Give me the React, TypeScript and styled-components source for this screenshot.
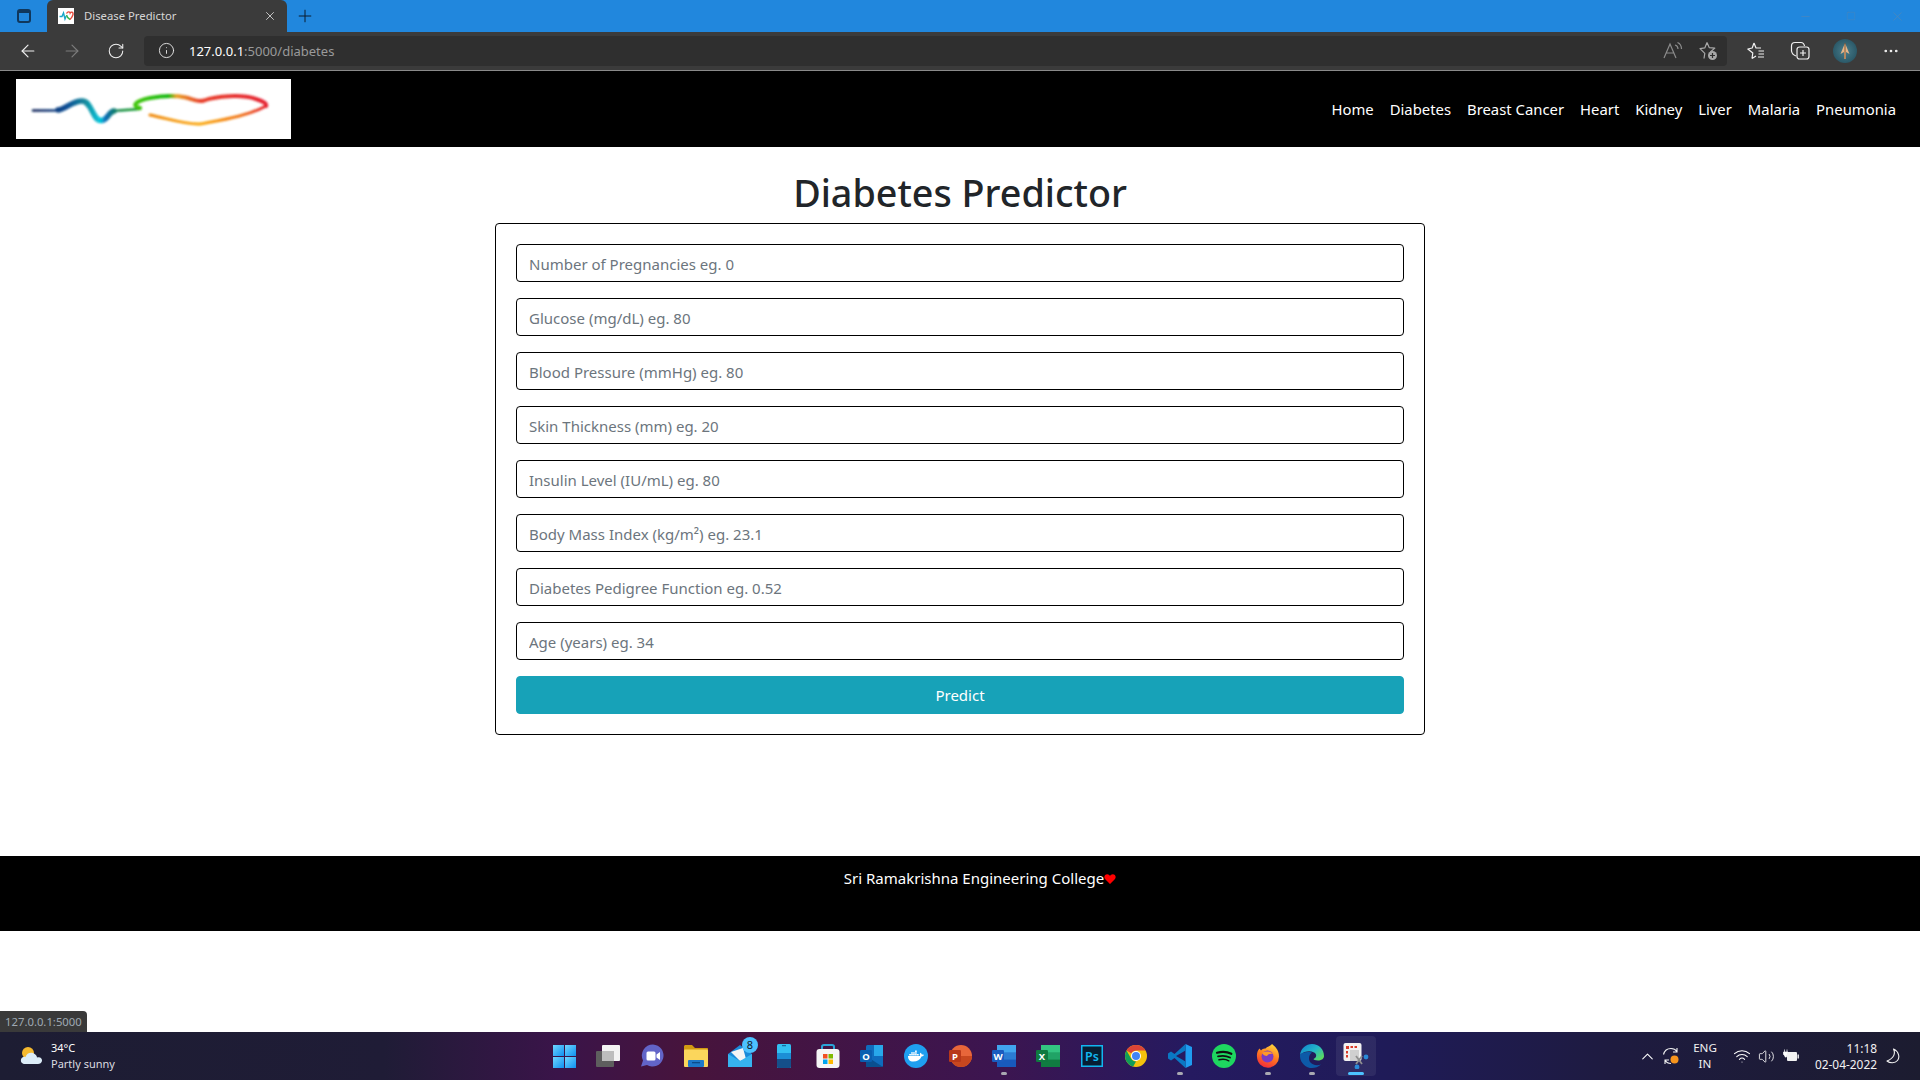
import { ReactNode } from 'react'
import styled, { createGlobalStyle } from 'styled-components'
import { ArrowLeft, ArrowRight, ChevronUp, Info, Minus, MoreHorizontal, Plus, RotateCw, Square, Volume2, Wifi, X } from 'lucide-react'
import { FaDocker } from 'react-icons/fa'

const GlobalStyle = createGlobalStyle`
  html, body {
    margin: 0;
    padding: 0;
    background: #fff;
  }
  body {
    font-family: 'Noto Sans', 'Open Sans', sans-serif;
    color: #212529;
  }
  * {
    box-sizing: border-box;
  }
`

const Screen = styled.div`
  position: relative;
  width: 1920px;
  height: 1080px;
  overflow: hidden;
  display: flex;
  flex-direction: column;
  background: #fff;
`

const TabStrip = styled.div`
  height: 32px;
  flex: none;
  display: flex;
  align-items: flex-end;
  background: #2187dd;
`

const StripButton = styled.div`
  width: 47px;
  height: 32px;
  display: flex;
  align-items: center;
  justify-content: center;
`

const TabIconFrame = styled.span`
  width: 14px;
  height: 14px;
  border: 2px solid #10375c;
  border-radius: 3px;
  border-top-width: 4px;
  display: block;
  background: #2187dd;
`

const Tab = styled.div`
  width: 240px;
  height: 32px;
  display: flex;
  align-items: center;
  padding: 0 10px 0 11px;
  background: #3b3b3b;
  border-radius: 6px 6px 0 0;
  color: #d6d6d6;
`

const TabTitle = styled.span`
  flex: 1;
  margin-left: 10px;
  padding-bottom: 2px;
  font-size: 11.3px;
  white-space: nowrap;
`

const Favicon = styled.span`
  width: 16px;
  height: 16px;
  background: #fff;
  display: flex;
  align-items: center;
  justify-content: center;
`

const NewTab = styled.div`
  width: 36px;
  height: 32px;
  display: flex;
  align-items: center;
  justify-content: center;
  color: #0c1c2e;
`

const WindowControls = styled.div`
  margin-left: auto;
  display: flex;
  height: 32px;
`

const WindowButton = styled.div`
  width: 46px;
  height: 32px;
  display: flex;
  align-items: center;
  justify-content: center;
  color: #5586b4;
`

const Toolbar = styled.div`
  height: 39px;
  flex: none;
  display: flex;
  align-items: center;
  padding: 0 0 1px 6px;
  background: #3b3b3b;
  border-bottom: 1px solid #8a8a8a;
`

const ToolButton = styled.div<{ $width?: number; $color?: string }>`
  width: ${p => p.$width ?? 44}px;
  height: 30px;
  flex: none;
  display: flex;
  align-items: center;
  justify-content: center;
  color: ${p => p.$color ?? '#f0f0f0'};
`

const AddressBar = styled.div`
  width: 1583px;
  height: 30px;
  flex: none;
  margin-left: 6px;
  display: flex;
  align-items: center;
  padding-left: 14px;
  background: #2f2f2f;
  border-radius: 4px;
`

const UrlText = styled.span`
  margin-left: 14px;
  flex: 1;
  font-size: 13px;
  color: #9a9a9a;
`

const UrlHost = styled.span`
  color: #fff;
`

const AddressActions = styled.div`
  display: flex;
  align-items: center;
`

const ToolbarActions = styled.div`
  display: flex;
  align-items: center;
  margin-left: 7px;
`

const Avatar = styled.span`
  width: 24px;
  height: 24px;
  border-radius: 50%;
  background: radial-gradient(circle, #4a7d8b, #1e4a5a);
  display: flex;
  align-items: center;
  justify-content: center;
`

const Navbar = styled.nav`
  height: 76px;
  flex: none;
  display: flex;
  align-items: center;
  justify-content: space-between;
  padding: 0 16px;
  background: #000;
`

const LogoBox = styled.div`
  width: 275px;
  height: 60px;
  background: #fff;
`

const NavLinks = styled.ul`
  display: flex;
  margin: 0;
  padding: 0;
  list-style: none;
`

const NavLink = styled.a`
  display: block;
  padding: 8px;
  font-size: 14.85px;
  line-height: 24px;
  color: #fff;
  text-decoration: none;
  white-space: nowrap;
`

const Main = styled.main`
  flex: 1;
  display: flex;
  flex-direction: column;
  align-items: center;
  min-height: 0;
`

const Title = styled.h1`
  margin: 22px 0 6px;
  font-size: 37.7px;
  font-weight: 500;
  line-height: 48px;
  color: #212529;
`

const FormCard = styled.form`
  width: 930px;
  height: 512px;
  display: flex;
  flex-direction: column;
  gap: 16px;
  padding: 20px;
  border: 1px solid #000;
  border-radius: 4px;
`

const FieldInput = styled.input`
  width: 100%;
  height: 38px;
  flex: none;
  padding: 7px 12px 5px;
  font-family: inherit;
  font-size: 15px;
  color: #495057;
  background: #fff;
  border: 1px solid #000;
  border-radius: 4px;
  outline: none;

  &::placeholder {
    color: #6c757d;
    opacity: 1;
  }
`

const PredictButton = styled.button`
  width: 100%;
  height: 38px;
  flex: none;
  padding-bottom: 2px;
  font-family: inherit;
  font-size: 15px;
  color: #fff;
  background: #17a2b8;
  border: 1px solid #17a2b8;
  border-radius: 4px;
`

const Footer = styled.footer`
  width: 100%;
  height: 75px;
  flex: none;
  margin-top: 121px;
  padding: 10px 0 0 40px;
  display: flex;
  justify-content: center;
  background: #000;
`

const FooterText = styled.span`
  font-size: 15px;
  line-height: 24px;
  color: #fff;
`

const FooterHeart = styled.span`
  display: inline-flex;
  vertical-align: -1px;
`

const StatusBubble = styled.div`
  position: absolute;
  left: 0;
  bottom: 48px;
  width: 87px;
  height: 21px;
  padding-left: 5px;
  font-size: 11.3px;
  line-height: 21px;
  white-space: nowrap;
  color: #9fa9b3;
  background: #3a3a3a;
  border-radius: 0 4px 0 0;
`

const Taskbar = styled.div`
  height: 48px;
  flex: none;
  display: grid;
  grid-template-columns: 1fr auto 1fr;
  align-items: center;
  background: linear-gradient(
    90deg,
    #1d1d33 0%,
    #1f1c36 20%,
    #3a1449 29%,
    #47143c 36%,
    #3c1550 52%,
    #251a60 62%,
    #1f1b58 72%,
    #1e1b40 84%,
    #1c1c30 100%
  );
`

const Weather = styled.div`
  display: flex;
  align-items: center;
  gap: 7px;
  padding-left: 20px;
`

const WeatherText = styled.div`
  display: flex;
  flex-direction: column;
  font-size: 11px;
  line-height: 16px;
  color: #fff;
`

const WeatherSub = styled.span`
  color: #dcdce0;
`

const TaskIcons = styled.div`
  display: flex;
`

const TaskButton = styled.div<{ $running?: boolean; $active?: boolean }>`
  position: relative;
  width: 44px;
  height: 48px;
  display: flex;
  align-items: center;
  justify-content: center;

  &::before {
    content: '';
    position: absolute;
    inset: 4px 2px;
    border-radius: 4px;
    background: ${p => (p.$active ? 'rgba(255,255,255,.07)' : 'transparent')};
  }

  &::after {
    content: '';
    position: absolute;
    left: 50%;
    bottom: 5px;
    height: 3px;
    width: ${p => (p.$active ? 16 : 6)}px;
    margin-left: ${p => (p.$active ? -8 : -3)}px;
    border-radius: 2px;
    background: ${p => (p.$active ? '#4cc2ff' : p.$running ? '#a9a9b2' : 'transparent')};
  }

  svg {
    position: relative;
  }
`

const Badge = styled.span`
  position: absolute;
  top: 5px;
  right: 4px;
  width: 16px;
  height: 16px;
  border-radius: 50%;
  background: #4cc2ff;
  color: #10202c;
  font-size: 11px;
  line-height: 16px;
  text-align: center;
`

const Tray = styled.div`
  display: flex;
  align-items: center;
  justify-content: flex-end;
  padding-right: 11px;
  color: #fff;
`

const TrayItem = styled.div<{ $width: number }>`
  width: ${p => p.$width}px;
  flex: none;
  display: flex;
  align-items: center;
  justify-content: center;
`

const LangText = styled.div`
  font-size: 11.6px;
  line-height: 16px;
  text-align: center;
  color: #f2f2f2;
`

const Clock = styled.div`
  width: 73px;
  flex: none;
  font-size: 11.9px;
  line-height: 16px;
  text-align: right;
  white-space: nowrap;
  color: #f2f2f2;
`

function Logo() {
  return (
    <svg width='275' height='60' viewBox='0 0 275 60'>
      <defs>
        <linearGradient id='waveGrad' gradientUnits='userSpaceOnUse' x1='15' y1='0' x2='135' y2='0'>
          <stop offset='0' stopColor='#0a1f55' />
          <stop offset='0.3' stopColor='#0b4f96' />
          <stop offset='0.45' stopColor='#148a9c' />
          <stop offset='0.58' stopColor='#05c8de' />
          <stop offset='0.62' stopColor='#0a6cb8' />
          <stop offset='0.75' stopColor='#0a8a3a' />
          <stop offset='1' stopColor='#1fa81f' />
        </linearGradient>
        <linearGradient id='topGrad' gradientUnits='userSpaceOnUse' x1='118' y1='0' x2='250' y2='0'>
          <stop offset='0' stopColor='#45c80a' />
          <stop offset='0.26' stopColor='#14b80e' />
          <stop offset='0.32' stopColor='#e8a020' />
          <stop offset='0.5' stopColor='#e8402a' />
          <stop offset='1' stopColor='#e52030' />
        </linearGradient>
        <linearGradient id='lowGrad' gradientUnits='userSpaceOnUse' x1='134' y1='0' x2='250' y2='0'>
          <stop offset='0' stopColor='#f08a0a' />
          <stop offset='0.45' stopColor='#fba80a' />
          <stop offset='0.8' stopColor='#f0701a' />
          <stop offset='1' stopColor='#e52030' />
        </linearGradient>
        <filter id='logoBlur' x='-5%' y='-20%' width='110%' height='140%'>
          <feGaussianBlur stdDeviation='0.8' />
        </filter>
      </defs>
      <g fill='none' strokeLinecap='round' filter='url(#logoBlur)'>
        <path d='M17 31.5 L44 31.5' stroke='url(#waveGrad)' strokeWidth='2.4' />
        <path d='M42 31 C50 30 56 22 66 22 C76 22 76 41 85 41.5 C92 41.5 92 33 98 32' stroke='url(#waveGrad)' strokeWidth='5.5' />
        <path d='M96 32 L124 30' stroke='url(#waveGrad)' strokeWidth='2.6' />
        <path d='M124 29 C115 27 119 22 134 19 C148 16.5 160 16.5 170 18.5 C178 20.5 182 23.5 188 21.5 C200 17 226 15 240 20 C248 22.5 251 25 250 27' stroke='url(#topGrad)' strokeWidth='4' />
        <path d='M134 36 C150 39 170 46 184 45 C205 41 232 37 250 27' stroke='url(#lowGrad)' strokeWidth='3' />
      </g>
    </svg>
  )
}

function SmallLogo() {
  return (
    <svg width='15' height='12' viewBox='0 0 15 12' fill='none' strokeWidth='1.4'>
      <path d='M0.5 6.5 H3 L4.5 3 L6 9 L7.2 6' stroke='#1aa6c8' />
      <path d='M7.5 3.5 C9 0.8 11 2 11.2 3 C12 1.5 14.5 2 14 4.5 C13.5 7 11 9.5 11 9.5' stroke='#e8483a' />
      <path d='M11 9.5 C9 8.5 8 7 7.5 5' stroke='#3cb64a' />
    </svg>
  )
}

function ReadAloud() {
  return (
    <svg width='22' height='20' viewBox='0 0 22 20' fill='none' stroke='#8c8c8c' strokeWidth='1.2'>
      <path d='M2 17 L8 3 L14 17 M4.4 12 H11.6' />
      <path d='M13 4 C15 4.5 16 6 16 8 M15.5 1.5 C18 2.5 19.5 5 19.5 8' />
    </svg>
  )
}

function FavoriteAdd() {
  return (
    <svg width='20' height='20' viewBox='0 0 20 20' fill='none'>
      <path
        d='M9 1.5 L11.2 6.6 L16.8 7.1 L12.6 10.8 L13.2 13 M6 17.5 L6.8 12.4 L2 7.6 L6.9 6.8 L9 1.5'
        stroke='#a8a8a8'
        strokeWidth='1.2'
        strokeLinejoin='round'
      />
      <circle cx='14.5' cy='14.5' r='4.5' fill='#a8a8a8' />
      <path d='M14.5 12 V17 M12 14.5 H17' stroke='#2f2f2f' strokeWidth='1.2' />
    </svg>
  )
}

function Favorites() {
  return (
    <svg width='20' height='20' viewBox='0 0 20 20' fill='none' stroke='#f0f0f0' strokeWidth='1.2' strokeLinejoin='round'>
      <path d='M8 2 L10 7 H15 M6 17.5 L6.8 12 L1.8 8 L6.2 7 L8 2 M6 17.5 L10 15' />
      <path d='M12.5 10 H18 M12.5 13 H18 M12 16 H18' />
    </svg>
  )
}

function Collections() {
  return (
    <svg width='20' height='20' viewBox='0 0 20 20' fill='none' stroke='#f0f0f0' strokeWidth='1.2'>
      <path d='M6 15 C3 14 2 13 1.5 10 L1.5 5 C1.5 3 3 1.5 5 1.5 H11 C13 1.5 14 2.5 14.5 5' />
      <rect x='7' y='6' width='12' height='12' rx='2.5' />
      <path d='M13 9 V15 M10 12 H16' />
    </svg>
  )
}

function Arrowhead() {
  return (
    <svg width='12' height='18' viewBox='0 0 12 18'>
      <path d='M6 1 L10.5 12 L7 10 L7 17 H5 L5 10 L1.5 12 Z' fill='#e3b68b' />
      <path d='M6 1 L6 17' stroke='#6b3f20' strokeWidth='0.8' />
    </svg>
  )
}

function Heart({ size = 12 }: { size?: number }) {
  return (
    <svg width={size} height={size} viewBox='0 0 12 12'>
      <path d='M6 11 L1 6 C-0.6 3.6 1 1.2 3.2 1.2 C4.6 1.2 5.4 2 6 3 C6.6 2 7.4 1.2 8.8 1.2 C11 1.2 12.6 3.6 11 6 Z' fill='#ff0000' />
    </svg>
  )
}

function WeatherIcon() {
  return (
    <svg width='24' height='20' viewBox='0 0 24 20'>
      <circle cx='8' cy='7' r='6' fill='#f5b92e' />
      <path d='M5 18 C1.5 18 0.5 15.5 1 13.5 C1.5 11.5 3.5 10.5 5.5 11 C6.5 7.5 10 6 13 7 C15.5 8 17 10 17 11.5 C20.5 10.5 22.5 13 22 15 C21.5 17 20 18 18 18 Z' fill='#dcecf7' />
    </svg>
  )
}

function SyncIcon() {
  return (
    <svg width='18' height='18' viewBox='0 0 18 18' fill='none' stroke='#f2f2f2' strokeWidth='1.1'>
      <path d='M1.5 7.5 C2.5 3.5 5.5 1.5 9 1.5 C11.5 1.5 13.5 2.5 15 4.5 M15 1 V5 H11' />
      <path d='M9 16.5 C6.5 16.5 4.5 15.5 3.5 13.5 M3 17 V13 H7' />
      <circle cx='12.5' cy='12.5' r='4' fill='#f7941d' stroke='none' />
    </svg>
  )
}

function BatteryIcon() {
  return (
    <svg width='16' height='14' viewBox='0 0 16 14'>
      <path d='M1.5 0.5 V3 M4 0.5 V3 M0.5 3 H5 V5.5 L3.5 7 V8 H2 V7 L0.5 5.5 Z' fill='#fff' stroke='#fff' strokeWidth='0.7' />
      <rect x='4' y='3' width='10' height='9' rx='1' fill='#f2f2f2' />
      <rect x='14.5' y='5.5' width='1.4' height='4' fill='#f2f2f2' />
    </svg>
  )
}

function MoonIcon() {
  return (
    <svg width='14' height='16' viewBox='0 0 14 16' fill='none' stroke='#f2f2f2' strokeWidth='1.1' strokeLinejoin='round'>
      <path d='M7.5 1 C9.5 5 8.5 10 1 13 C4 15.5 9 15.5 11.5 12.5 C14 9.5 13 3.5 7.5 1 Z' />
    </svg>
  )
}

const WinLogo = () => (
  <svg width='23' height='23' viewBox='0 0 23 23'>
    <defs>
      <linearGradient id='winGrad' x1='0' y1='0' x2='1' y2='1'>
        <stop offset='0' stopColor='#6fd6ff' />
        <stop offset='1' stopColor='#0f90f0' />
      </linearGradient>
    </defs>
    <rect x='0' y='0' width='11' height='11' fill='url(#winGrad)' />
    <rect x='12' y='0' width='11' height='11' fill='url(#winGrad)' />
    <rect x='0' y='12' width='11' height='11' fill='url(#winGrad)' />
    <rect x='12' y='12' width='11' height='11' fill='url(#winGrad)' />
  </svg>
)

const TaskView = () => (
  <svg width='24' height='22' viewBox='0 0 24 22'>
    <rect x='6' y='0' width='18' height='16' rx='1' fill='#f3f3f3' />
    <rect x='0' y='6' width='18' height='16' rx='1' fill='#5e5e5e' />
    <rect x='6' y='6' width='12' height='10' fill='#bdbdbd' />
  </svg>
)

const Teams = () => (
  <svg width='24' height='24' viewBox='0 0 24 24'>
    <path d='M13 1 A11 11 0 1 1 7 21.5 L1 23 L3 17 A11 11 0 0 1 13 1 Z' fill='#6264c8' transform='translate(0 -0.5)' />
    <rect x='6.5' y='7.5' width='9' height='9' rx='1.5' fill='#fff' />
    <path d='M16.5 10.5 L20 8 V16 L16.5 13.5 Z' fill='#fff' />
  </svg>
)

const Folder = () => (
  <svg width='24' height='22' viewBox='0 0 24 22'>
    <path d='M0 1.5 C0 0.7 .7 0 1.5 0 H8 L11 3 H23 C23.6 3 24 3.4 24 4 V8 H0 Z' fill='#d19a12' />
    <rect x='0' y='4.5' width='24' height='17.5' rx='1' fill='#fbd65c' />
    <rect x='4' y='15' width='16' height='7' rx='1' fill='#1d79c9' />
    <rect x='8' y='17' width='8' height='1.3' fill='#0c4d8a' />
  </svg>
)

const Mail = () => (
  <svg width='24' height='22' viewBox='0 0 24 22'>
    <path d='M0 9 L12 0 L24 9 V22 H0 Z' fill='#1a8ad8' />
    <path d='M3 7 L15 3 L18 14 L12 16 Z' fill='#f5f5f5' />
    <path d='M0 9 L12 16 L24 9 V22 H0 Z' fill='#36b3ef' />
  </svg>
)

const Phone = () => (
  <svg width='14' height='24' viewBox='0 0 14 24'>
    <rect x='0' y='0' width='14' height='24' rx='1.5' fill='#33c0f2' />
    <rect x='0' y='9' width='14' height='6' fill='#1c8fd6' />
    <path d='M0 15 H14 V22.5 C14 23.3 13.3 24 12.5 24 H1.5 C.7 24 0 23.3 0 22.5 Z' fill='#154f8a' />
    <rect x='5' y='1.2' width='4' height='1' fill='#0e5a8e' />
  </svg>
)

const Store = () => (
  <svg width='24' height='24' viewBox='0 0 24 24'>
    <path d='M6 6 V2.5 C6 1.5 7 1 8 1 H16 C17 1 18 1.5 18 2.5 V6' fill='none' stroke='#2aa4d8' strokeWidth='2' />
    <rect x='0.5' y='5' width='23' height='19' rx='3' fill='#f5f5f5' />
    <rect x='7' y='10' width='4.5' height='4.5' fill='#f25022' />
    <rect x='12.5' y='10' width='4.5' height='4.5' fill='#7fba00' />
    <rect x='7' y='15.5' width='4.5' height='4.5' fill='#00a4ef' />
    <rect x='12.5' y='15.5' width='4.5' height='4.5' fill='#ffb900' />
  </svg>
)

const Outlook = () => (
  <svg width='24' height='24' viewBox='0 0 24 24'>
    <rect x='6' y='1' width='17' height='22' rx='1.5' fill='#0f6cbd' />
    <rect x='14' y='1' width='9' height='11' fill='#28a8ea' />
    <path d='M6 12 L23 23 H6 Z' fill='#0a4f8f' />
    <rect x='0' y='6' width='12' height='12' rx='1.2' fill='#0a5fb0' />
    <text x='6' y='15.6' textAnchor='middle' fontSize='9.5' fontWeight='700' fill='#fff' fontFamily='Noto Sans, sans-serif'>O</text>
  </svg>
)

const Docker = () => (
  <svg width='24' height='24' viewBox='0 0 24 24'>
    <circle cx='12' cy='12' r='12' fill='#1f9ff0' />
    <g transform='translate(4 4)'>
      <FaDocker size={16} color='#fff' />
    </g>
  </svg>
)

const Tile = ({ light, mid, dark, tile, letter }: { light: string; mid: string; dark: string; tile: string; letter: string }) => (
  <svg width='24' height='24' viewBox='0 0 24 24'>
    <rect x='5' y='1' width='19' height='22' rx='1.5' fill={mid} />
    <rect x='5' y='1' width='19' height='7.3' fill={light} />
    <rect x='5' y='15.6' width='19' height='7.4' fill={dark} />
    <rect x='0' y='6' width='12' height='12' rx='1.2' fill={tile} />
    <text x='6' y='15.6' textAnchor='middle' fontSize='9.5' fontWeight='700' fill='#fff' fontFamily='Noto Sans, sans-serif'>{letter}</text>
  </svg>
)

const PowerPoint = () => (
  <svg width='24' height='24' viewBox='0 0 24 24'>
    <circle cx='13' cy='12' r='11' fill='#e8663a' />
    <path d='M13 12 H24 A11 11 0 0 1 2 12 Z' fill='#c8471f' />
    <rect x='1' y='6' width='12' height='12' rx='1.2' fill='#b8381a' />
    <text x='7' y='15.6' textAnchor='middle' fontSize='9.5' fontWeight='700' fill='#fff' fontFamily='Noto Sans, sans-serif'>P</text>
  </svg>
)

const Photoshop = () => (
  <svg width='22' height='22' viewBox='0 0 22 22'>
    <rect x='0.75' y='0.75' width='20.5' height='20.5' fill='#061e33' stroke='#12b6f0' strokeWidth='1.5' />
    <text x='11' y='16' textAnchor='middle' fontSize='12.5' fontWeight='600' fill='#12b6f0' fontFamily='Noto Sans, sans-serif'>Ps</text>
  </svg>
)

const Chrome = () => (
  <svg width='22' height='22' viewBox='0 0 22 22'>
    <circle cx='11' cy='11' r='11' fill='#f4c20d' />
    <path d='M11 0 A11 11 0 0 1 20.5 5.5 H11 A5.5 5.5 0 0 0 6.2 8.3 L1.5 5.5 A11 11 0 0 1 11 0 Z' fill='#db4437' />
    <path d='M1.5 5.5 L6.2 13.7 A5.5 5.5 0 0 0 11 16.5 L8.2 21.6 A11 11 0 0 1 1.5 5.5 Z' fill='#0f9d58' />
    <circle cx='11' cy='11' r='5' fill='#fff' />
    <circle cx='11' cy='11' r='4' fill='#4285f4' />
  </svg>
)

const VsCode = () => (
  <svg width='24' height='24' viewBox='0 0 24 24'>
    <path d='M17.5 0 L24 3 V21 L17.5 24 L17.5 0 Z' fill='#1f9cf0' />
    <path d='M17.5 0 V6.5 L8 12 L17.5 17.5 V24 L6.5 14 L3 16.5 L0 14.5 V9.5 L3 7.5 L6.5 10 Z' fill='#0a78c4' />
  </svg>
)

const Spotify = () => (
  <svg width='24' height='24' viewBox='0 0 24 24' fill='none' stroke='#101010' strokeLinecap='round'>
    <circle cx='12' cy='12' r='12' fill='#1ed760' stroke='none' />
    <path d='M5 8.8 C10 7.3 15 7.6 19.3 9.8' strokeWidth='2.2' />
    <path d='M6 12.4 C10 11.4 14.5 11.7 18 13.5' strokeWidth='1.8' />
    <path d='M7 15.8 C10.5 15 14 15.2 16.8 16.8' strokeWidth='1.5' />
  </svg>
)

const Firefox = () => (
  <svg width='24' height='24' viewBox='0 0 24 24'>
    <defs>
      <linearGradient id='foxGrad' x1='0.7' y1='0' x2='0.3' y2='1'>
        <stop offset='0' stopColor='#ffd43a' />
        <stop offset='0.5' stopColor='#ff7a1f' />
        <stop offset='1' stopColor='#f0283c' />
      </linearGradient>
    </defs>
    <path d='M16 0 C18 2 23 5 23 12.5 A11 11 0 0 1 1 13 C0.5 9 2 6 3.5 4.5 L5 6.5 C6 5 8 4.2 9.5 4.5 C11 2.5 14 2.5 16 0 Z' fill='url(#foxGrad)' />
    <circle cx='11.5' cy='12.5' r='6' fill='#7b3bc4' />
    <path d='M6 9 C9 7 15 7 17 10 C14 9.5 12 10.5 11 12 C9 12 7 11 6 9 Z' fill='#ff9a2a' />
  </svg>
)

const Edge = () => (
  <svg width='24' height='24' viewBox='0 0 24 24'>
    <defs>
      <linearGradient id='edgeGrad' x1='0' y1='0' x2='1' y2='0.8'>
        <stop offset='0' stopColor='#0f7fd0' />
        <stop offset='0.55' stopColor='#23b6c8' />
        <stop offset='1' stopColor='#5fdc5a' />
      </linearGradient>
    </defs>
    <path d='M0 11 C1 4 6 0 12 0 C19 0 24 5 24 12 C24 15 21 16.5 18 16.5 C15 16.5 13.5 15.5 13.5 15 C16 14 16.5 12 16 10.5 C14.5 7 6 5.5 0 11 Z' fill='url(#edgeGrad)' />
    <path d='M0 11 C-0.5 18 5.5 24 12 24 C15 24 18.5 23 21 20.5 C17 22 12 21 10 18 C8 15 9 10.5 12 8.5 C7 7.5 2 8 0 11 Z' fill='#0d5aa8' />
  </svg>
)

const Snip = () => (
  <svg width='26' height='26' viewBox='0 0 26 26'>
    <rect x='0.5' y='0' width='18' height='18' rx='2' fill='#f2f2f2' />
    <path d='M3 3 H6 V6 H3 Z M7.5 3 H10 V5 H7.5 Z M11.5 3 H14 V5 H11.5 Z M3 8 H5 V10.5 H3 Z M3 12 H5 V14.5 H3 Z' fill='#d83b2a' />
    <path d='M7 7 H16 V18 H7 Z' fill='#d0d0d0' />
    <path d='M13 13 L19 21 M19 13 L13 21' stroke='#8f8f8f' strokeWidth='1.8' />
    <circle cx='23' cy='14' r='2.4' fill='#2a8ad8' />
    <circle cx='14' cy='24' r='2.4' fill='#2a8ad8' />
  </svg>
)

const NAV_ITEMS = ['Home', 'Diabetes', 'Breast Cancer', 'Heart', 'Kidney', 'Liver', 'Malaria', 'Pneumonia']

const FIELDS = [
  'Number of Pregnancies eg. 0',
  'Glucose (mg/dL) eg. 80',
  'Blood Pressure (mmHg) eg. 80',
  'Skin Thickness (mm) eg. 20',
  'Insulin Level (IU/mL) eg. 80',
  'Body Mass Index (kg/m²) eg. 23.1',
  'Diabetes Pedigree Function eg. 0.52',
  'Age (years) eg. 34'
]

const TASK_APPS: { icon: ReactNode; running?: boolean; active?: boolean; badge?: string }[] = [
  { icon: <WinLogo /> },
  { icon: <TaskView /> },
  { icon: <Teams /> },
  { icon: <Folder /> },
  { icon: <Mail />, badge: '8' },
  { icon: <Phone /> },
  { icon: <Store /> },
  { icon: <Outlook /> },
  { icon: <Docker /> },
  { icon: <PowerPoint /> },
  { icon: <Tile light='#41a5ee' mid='#2b7cd3' dark='#185abd' tile='#1a5cc0' letter='W' />, running: true },
  { icon: <Tile light='#33c481' mid='#21a366' dark='#107c41' tile='#0f7a40' letter='X' /> },
  { icon: <Photoshop /> },
  { icon: <Chrome /> },
  { icon: <VsCode />, running: true },
  { icon: <Spotify /> },
  { icon: <Firefox />, running: true },
  { icon: <Edge />, running: true },
  { icon: <Snip />, active: true }
]

function App() {
  return (
    <Screen>
      <GlobalStyle />
      <TabStrip>
        <StripButton>
          <TabIconFrame />
        </StripButton>
        <Tab>
          <Favicon>
            <SmallLogo />
          </Favicon>
          <TabTitle>Disease Predictor</TabTitle>
          <X size={14} strokeWidth={1.5} color='#d6d6d6' />
        </Tab>
        <NewTab>
          <Plus size={20} strokeWidth={1.2} />
        </NewTab>
        <WindowControls>
          <WindowButton>
            <Minus size={13} strokeWidth={1} />
          </WindowButton>
          <WindowButton>
            <Square size={10} strokeWidth={1} />
          </WindowButton>
          <WindowButton>
            <X size={15} strokeWidth={1} />
          </WindowButton>
        </WindowControls>
      </TabStrip>

      <Toolbar>
        <ToolButton>
          <ArrowLeft size={20} strokeWidth={1.4} />
        </ToolButton>
        <ToolButton $color='#7c7c7c'>
          <ArrowRight size={20} strokeWidth={1.4} />
        </ToolButton>
        <ToolButton>
          <RotateCw size={18} strokeWidth={1.4} />
        </ToolButton>
        <AddressBar>
          <Info size={17} strokeWidth={1.3} color='#e8e8e8' />
          <UrlText>
            <UrlHost>127.0.0.1</UrlHost>:5000/diabetes
          </UrlText>
          <AddressActions>
            <ToolButton $width={32}>
              <ReadAloud />
            </ToolButton>
            <ToolButton $width={38}>
              <FavoriteAdd />
            </ToolButton>
          </AddressActions>
        </AddressBar>
        <ToolbarActions>
          <ToolButton>
            <Favorites />
          </ToolButton>
          <ToolButton>
            <Collections />
          </ToolButton>
          <ToolButton $width={46}>
            <Avatar>
              <Arrowhead />
            </Avatar>
          </ToolButton>
          <ToolButton $width={46}>
            <MoreHorizontal size={18} strokeWidth={1.6} />
          </ToolButton>
        </ToolbarActions>
      </Toolbar>

      <Navbar>
        <LogoBox>
          <Logo />
        </LogoBox>
        <NavLinks>
          {NAV_ITEMS.map(item => (
            <li key={item}>
              <NavLink href='#'>{item}</NavLink>
            </li>
          ))}
        </NavLinks>
      </Navbar>

      <Main>
        <Title>Diabetes Predictor</Title>
        <FormCard>
          {FIELDS.map(field => (
            <FieldInput key={field} type='text' placeholder={field} />
          ))}
          <PredictButton type='button'>Predict</PredictButton>
        </FormCard>
        <Footer>
          <FooterText>
            Sri Ramakrishna Engineering College
            <FooterHeart>
              <Heart />
            </FooterHeart>
          </FooterText>
        </Footer>
      </Main>

      <StatusBubble>127.0.0.1:5000</StatusBubble>

      <Taskbar>
        <Weather>
          <WeatherIcon />
          <WeatherText>
            34°C
            <WeatherSub>Partly sunny</WeatherSub>
          </WeatherText>
        </Weather>
        <TaskIcons>
          {TASK_APPS.map((app, i) => (
            <TaskButton key={i} $running={app.running} $active={app.active}>
              {app.icon}
              {app.badge && <Badge>{app.badge}</Badge>}
            </TaskButton>
          ))}
        </TaskIcons>
        <Tray>
          <TrayItem $width={30}>
            <ChevronUp size={19} strokeWidth={1.3} />
          </TrayItem>
          <TrayItem $width={18}>
            <SyncIcon />
          </TrayItem>
          <TrayItem $width={50}>
            <LangText>
              ENG
              <br />
              IN
            </LangText>
          </TrayItem>
          <TrayItem $width={24}>
            <Wifi size={18} strokeWidth={1.4} />
          </TrayItem>
          <TrayItem $width={24}>
            <Volume2 size={17} strokeWidth={1.2} />
          </TrayItem>
          <TrayItem $width={26}>
            <BatteryIcon />
          </TrayItem>
          <Clock>
            11:18
            <br />
            02-04-2022
          </Clock>
          <TrayItem $width={32}>
            <MoonIcon />
          </TrayItem>
        </Tray>
      </Taskbar>
    </Screen>
  )
}

export default App
